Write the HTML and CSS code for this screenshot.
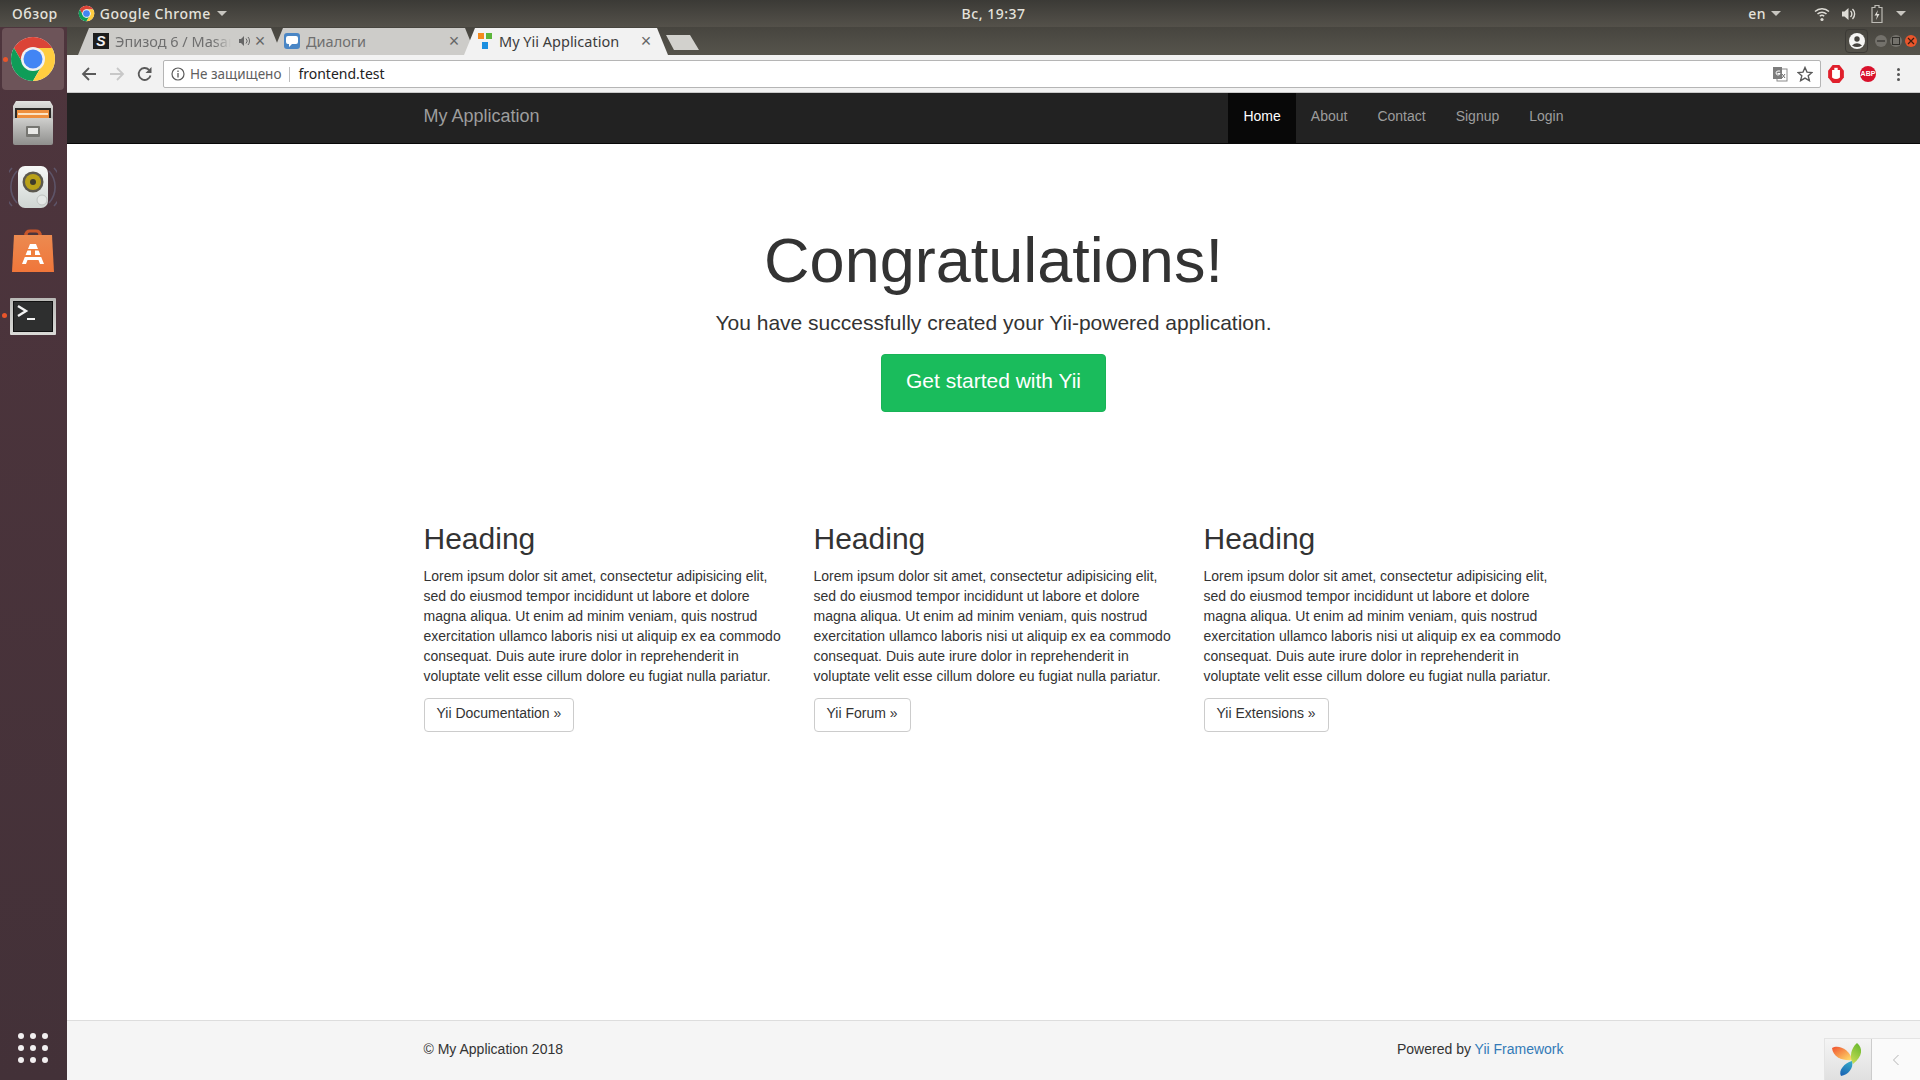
FILE: index.html
```html
<!DOCTYPE html>
<html lang="en">
<head>
<meta charset="utf-8">
<title>My Yii Application</title>
<link rel="stylesheet" href="styles.css">
</head>
<body>
<svg class="defs" width="0" height="0" aria-hidden="true">
  <defs>
    <symbol id="chrome" viewBox="0 0 48 48">
      <circle cx="24" cy="24" r="22" fill="#fff"/>
      <path fill="#db4437" d="M4.95 13A22 22 0 0 1 43.05 13H24A11 11 0 0 0 14.5 29.5Z"/>
      <path fill="#0f9d58" d="M4.95 13A22 22 0 0 0 24 46L33.5 29.5A11 11 0 0 1 14.5 29.5Z"/>
      <path fill="#ffcd40" d="M43.05 13A22 22 0 0 1 24 46L33.5 29.5A11 11 0 0 0 24 13Z"/>
      <circle cx="24" cy="24" r="12" fill="#f1f1f1"/>
      <circle cx="24" cy="24" r="9.5" fill="#4285f4"/>
    </symbol>
    <linearGradient id="cab" x1="0" y1="0" x2="0" y2="1"><stop offset="0" stop-color="#cfcfcd"/><stop offset="1" stop-color="#8f8f8d"/></linearGradient>
    <linearGradient id="cabtop" x1="0" y1="0" x2="0" y2="1"><stop offset="0" stop-color="#e2e2e0"/><stop offset="1" stop-color="#a9a9a7"/></linearGradient>
    <linearGradient id="bag" x1="0" y1="0" x2="0" y2="1"><stop offset="0" stop-color="#ec8a50"/><stop offset="1" stop-color="#f0763a"/></linearGradient>
    <linearGradient id="spk" x1="0" y1="0" x2="0" y2="1"><stop offset="0" stop-color="#f6f8f7"/><stop offset="1" stop-color="#cfd5d2"/></linearGradient>
    <linearGradient id="term" x1="0" y1="0" x2="0" y2="1"><stop offset="0" stop-color="#b9b9b6"/><stop offset="1" stop-color="#dadad7"/></linearGradient>
    <linearGradient id="ya" x1="0" y1="0" x2="1" y2="1"><stop offset="0" stop-color="#f0502e"/><stop offset="1" stop-color="#ffe36e"/></linearGradient>
    <linearGradient id="yb" x1="0.7" y1="0" x2="0.3" y2="1"><stop offset="0" stop-color="#69b82e"/><stop offset="1" stop-color="#c6dc55"/></linearGradient>
    <linearGradient id="yc" x1="0.7" y1="0" x2="0.3" y2="1"><stop offset="0" stop-color="#34a8c8"/><stop offset="1" stop-color="#1a64b4"/></linearGradient>
  </defs>
</svg>

<header class="topbar">
  <div class="top-left">
    <span class="top-item">Обзор</span>
    <span class="top-app">
      <svg class="top-chrome" width="17" height="17"><use href="#chrome"/></svg>
      <span class="top-item">Google Chrome</span>
      <span class="caret"></span>
    </span>
  </div>
  <div class="top-item top-clock">Вс, 19:37</div>
  <div class="top-right">
    <span class="top-item">en</span><span class="caret caret-en"></span>
    <svg class="ic-wifi" width="16" height="16" viewBox="0 0 16 16"><path d="M1 5.5a10 10 0 0 1 14 0M3.5 8a6.5 6.5 0 0 1 9 0M5.8 10.3a3.2 3.2 0 0 1 4.4 0" fill="none" stroke="#dedcd6" stroke-width="1.5"/><circle cx="8" cy="13.5" r="1.6" fill="#dedcd6"/></svg>
    <svg class="ic-vol" width="16" height="16" viewBox="0 0 16 16"><path d="M1 5.5h2.5L7.5 2v12L3.5 10.5H1Z" fill="#dedcd6"/><path d="M9.5 5a4 4 0 0 1 0 6M11.5 3a7 7 0 0 1 0 10" fill="none" stroke="#dedcd6" stroke-width="1.4"/></svg>
    <svg class="ic-bat" width="12" height="18" viewBox="0 0 12 18"><path d="M4 .5h4v2h3v15H1v-15h3Z" fill="none" stroke="#bdbbb5" stroke-width="1.2"/><path d="M7 5 3.500 10.500H6L5 15l3.500-6H6Z" fill="#dedcd6"/></svg>
    <span class="caret caret-end"></span>
  </div>
</header>

<div class="desktop">
  <aside class="dock">
    <div class="dock-top">
      <div class="dock-tile">
        <span class="run-dot"></span>
        <svg width="48" height="48"><use href="#chrome"/></svg>
      </div>
      <svg class="dock-cabinet" width="42" height="44" viewBox="0 0 42 44">
        <path d="M4 0h34l3 5v16H1V5Z" fill="url(#cabtop)"/>
        <rect x="3" y="7" width="36" height="14" fill="#2c2a28"/>
        <rect x="5" y="9" width="32" height="12" fill="#ee8f3e"/>
        <rect x="6" y="12" width="30" height="2" fill="#fbe3c4"/>
        <rect x="1" y="17" width="40" height="27" rx="2" fill="url(#cab)"/>
        <rect x="14" y="25" width="14" height="11" rx="1" fill="#767672"/>
        <rect x="16" y="27" width="10" height="6" fill="#e8e8e6"/>
      </svg>
      <svg class="dock-speaker" width="48" height="42" viewBox="0 0 48 42">
        <path d="M8 5a24 24 0 0 0 0 32M3 2a28 28 0 0 0 0 38M40 5a24 24 0 0 1 0 32M45 2a28 28 0 0 1 0 38" fill="none" stroke="#5d5468" stroke-width="1.6"/>
        <rect x="9" y="0" width="30" height="42" rx="7" fill="url(#spk)"/>
        <circle cx="24" cy="16" r="10.500" fill="#5c594f"/>
        <circle cx="24" cy="16" r="8" fill="#b9a118"/>
        <circle cx="24" cy="16" r="3" fill="#3f3b2c"/>
        <circle cx="33" cy="34" r="5" fill="#e4e7e5" stroke="#bfc3c0"/>
      </svg>
      <svg class="dock-bag" width="42" height="43" viewBox="0 0 42 43">
        <path d="M14 14V6q0-4 4-4h6q4 0 4 4v8" fill="none" stroke="#c8562a" stroke-width="3"/>
        <path d="M2 6h38l2 37H0Z" fill="url(#bag)"/>
        <path d="M14 6V4M28 6V4" stroke="#c8562a" stroke-width="3"/>
        <path d="M18 15h6l8 20h-4l-1.500-4h-11L14 35h-4Z" fill="#fff"/>
        <rect x="14" y="20" width="14" height="1.500" fill="#ef7f3e"/>
        <rect x="12" y="26" width="18" height="2" fill="#ef7f3e"/>
        <rect x="19" y="21" width="4" height="5" fill="#ef7f3e"/>
      </svg>
      <div class="dock-term-wrap">
        <span class="run-dot"></span>
        <svg width="46" height="37" viewBox="0 0 46 37">
          <rect width="46" height="37" rx="1" fill="url(#term)"/>
          <rect x="3" y="3" width="40" height="31" fill="#111"/>
          <rect x="4" y="4" width="38" height="29" fill="#2e2f2f"/>
          <path d="M8 8l8 5-8 5" fill="none" stroke="#f2f2f2" stroke-width="2.400"/>
          <rect x="17" y="20" width="8" height="2" fill="#f2f2f2"/>
        </svg>
      </div>
    </div>
    <div class="apps">
      <i></i><i></i><i></i><i></i><i></i><i></i><i></i><i></i><i></i>
    </div>
  </aside>

  <div class="window">
    <div class="tabstrip">
      <div class="tabs">
        <div class="tab tab-one">
          <span class="fav fav-s">S</span>
          <span class="tab-title tab-fade">Эпизод 6 / Masaru</span>
          <svg class="tab-sound" width="12" height="12" viewBox="0 0 12 12"><path d="M1 4h2l3-3v10L3 8H1Z" fill="#666"/><path d="M8 3.500a3.500 3.500 0 0 1 0 5M10 2a6 6 0 0 1 0 8" fill="none" stroke="#666"/></svg>
          <span class="tab-x">×</span>
        </div>
        <div class="tab tab-two">
          <span class="fav fav-d"><svg width="12" height="11" viewBox="0 0 12 11"><path d="M2 0h8q2 0 2 2v4q0 2-2 2H6L3 11V8H2Q0 8 0 6V2q0-2 2-2Z" fill="#fff"/></svg></span>
          <span class="tab-title">Диалоги</span>
          <span class="tab-x">×</span>
        </div>
        <div class="tab tab-active">
          <svg class="fav" width="14" height="16" viewBox="0 0 14 16"><rect width="6" height="6" fill="#f48a1c"/><rect x="8" width="6" height="6" fill="#5bb53a"/><rect x="4" y="9" width="6" height="7" fill="#1b8fe0"/></svg>
          <span class="tab-title">My Yii Application</span>
          <span class="tab-x">×</span>
        </div>
        <div class="newtab"></div>
      </div>
      <div class="win-controls">
        <span class="profile"><svg width="16" height="16" viewBox="0 0 16 16"><circle cx="8" cy="8" r="8" fill="#f5f5f3"/><circle cx="8" cy="6" r="2.700" fill="#45433e"/><path d="M3 12.500q5-4.500 10 0 -5 3-10 0Z" fill="#45433e"/></svg></span>
        <span class="wbtn"><svg width="8" height="8" viewBox="0 0 8 8"><path d="M0 4h8" stroke="#2f2e2a" stroke-width="1.200"/></svg></span>
        <span class="wbtn"><svg width="8" height="8" viewBox="0 0 8 8"><rect x=".5" y=".5" width="7" height="7" fill="none" stroke="#2f2e2a"/></svg></span>
        <span class="wbtn wbtn-close"><svg width="8" height="8" viewBox="0 0 8 8"><path d="M1 1l6 6M7 1 1 7" stroke="#3a1d10" stroke-width="1.200"/></svg></span>
      </div>
    </div>

    <div class="toolbar">
      <svg class="nav-ic" width="16" height="16" viewBox="0 0 16 16"><path d="M15 8H2M8 2 2 8l6 6" fill="none" stroke="#5a5a5a" stroke-width="1.800"/></svg>
      <svg class="nav-ic" width="16" height="16" viewBox="0 0 16 16"><path d="M1 8h13M8 2l6 6-6 6" fill="none" stroke="#c8c8c8" stroke-width="1.800"/></svg>
      <svg class="nav-ic nav-ic-last" width="16" height="16" viewBox="0 0 16 16"><path d="M13.500 9.500A6 6 0 1 1 12 3.800" fill="none" stroke="#5a5a5a" stroke-width="1.800"/><path d="M14.500 1v6h-6Z" fill="#5a5a5a"/></svg>
      <div class="omnibox">
        <svg class="info" width="14" height="14" viewBox="0 0 14 14"><circle cx="7" cy="7" r="6" fill="none" stroke="#5a5a5a" stroke-width="1.200"/><path d="M7 6v4.500M7 3.500v1.500" stroke="#5a5a5a" stroke-width="1.300"/></svg>
        <span class="insecure">Не защищено</span>
        <span class="omni-sep"></span>
        <span class="url">frontend.test</span>
        <svg class="omni-translate" width="16" height="16" viewBox="0 0 16 16"><rect x="5" y="3" width="10" height="12" fill="#fff" stroke="#8a8a8a"/><rect x="1" y="1" width="9" height="12" fill="#7d7d7d"/><path d="M8 5H6a2 2 0 1 0 2 2.500H5.500" fill="none" stroke="#fff"/><path d="M10 8l3 4M13 8l-3 4" stroke="#6d6d6d"/></svg>
        <svg class="omni-star" width="16" height="16" viewBox="0 0 16 16"><path d="M8 1.500l2 4.600 5 .4-3.800 3.300 1.200 4.900L8 12.100l-4.400 2.600 1.200-4.900L1 6.500l5-.4Z" fill="none" stroke="#5a5a5a" stroke-width="1.400"/></svg>
      </div>
      <svg class="ext ext-opera" width="18" height="18" viewBox="0 0 16 16"><path d="M5 0h6l4 5v6l-4 5H5L1 11V5Z" fill="#e0202c"/><path d="M4.500 4.500h7V11q-3.500 3-7 0Z" fill="#fff"/><path d="M6.500 2.500h3v4h-3Z" fill="#fff"/></svg>
      <span class="ext ext-abp">ABP</span>
      <span class="dots"><i></i><i></i><i></i></span>
    </div>

    <main class="page">
      <nav class="navbar">
        <div class="container nav-inner">
          <a class="brand" href="#">My Application</a>
          <ul class="nav-list">
            <li class="active"><a href="#">Home</a></li>
            <li><a href="#">About</a></li>
            <li><a href="#">Contact</a></li>
            <li><a href="#">Signup</a></li>
            <li><a href="#">Login</a></li>
          </ul>
        </div>
      </nav>

      <div class="wrap">
        <div class="container">
          <section class="jumbotron">
            <h1>Congratulations!</h1>
            <p class="lead">You have successfully created your Yii-powered application.</p>
            <p class="cta-line"><a class="btn btn-cta" href="#">Get started with Yii</a></p>
          </section>
          <section class="row">
            <article class="col">
              <h2>Heading</h2>
              <p>Lorem ipsum dolor sit amet, consectetur adipisicing elit, sed do eiusmod tempor incididunt ut labore et dolore magna aliqua. Ut enim ad minim veniam, quis nostrud exercitation ullamco laboris nisi ut aliquip ex ea commodo consequat. Duis aute irure dolor in reprehenderit in voluptate velit esse cillum dolore eu fugiat nulla pariatur.</p>
              <p><a class="btn btn-default" href="#">Yii Documentation »</a></p>
            </article>
            <article class="col">
              <h2>Heading</h2>
              <p>Lorem ipsum dolor sit amet, consectetur adipisicing elit, sed do eiusmod tempor incididunt ut labore et dolore magna aliqua. Ut enim ad minim veniam, quis nostrud exercitation ullamco laboris nisi ut aliquip ex ea commodo consequat. Duis aute irure dolor in reprehenderit in voluptate velit esse cillum dolore eu fugiat nulla pariatur.</p>
              <p><a class="btn btn-default" href="#">Yii Forum »</a></p>
            </article>
            <article class="col">
              <h2>Heading</h2>
              <p>Lorem ipsum dolor sit amet, consectetur adipisicing elit, sed do eiusmod tempor incididunt ut labore et dolore magna aliqua. Ut enim ad minim veniam, quis nostrud exercitation ullamco laboris nisi ut aliquip ex ea commodo consequat. Duis aute irure dolor in reprehenderit in voluptate velit esse cillum dolore eu fugiat nulla pariatur.</p>
              <p><a class="btn btn-default" href="#">Yii Extensions »</a></p>
            </article>
          </section>
        </div>
      </div>

      <footer class="footer">
        <div class="container foot-inner">
          <span>© My Application 2018</span>
          <span>Powered by <a href="#">Yii Framework</a></span>
        </div>
      </footer>

      <div class="debugbar">
        <span class="debug-logo">
          <svg width="36" height="34" viewBox="0 0 36 34">
            <path d="M2 5C8 1 20 6 22 17 14 18 3 15 2 5Z" fill="url(#ya)"/>
            <path d="M27 0C33 5 33 13 23 21 19 14 21 5 27 0Z" fill="url(#yb)"/>
            <path d="M22 18C24 25 18 32 11 33 8 28 14 20 22 18Z" fill="url(#yc)"/>
          </svg>
        </span>
        <span class="debug-toggle"><svg width="8" height="12" viewBox="0 0 8 12"><path d="M6.500 1 1.500 6l5 5" fill="none" stroke="#b5b5b5"/></svg></span>
      </div>
    </main>
  </div>
</div>
</body>
</html>
```

FILE: styles.css
```css
* { box-sizing: border-box; }
html, body { height: 100%; }
body {
  margin: 0;
  height: 1080px;
  overflow: hidden;
  display: flex;
  flex-direction: column;
  font-family: "Liberation Sans", Arial, sans-serif;
  font-size: 14px;
  line-height: 20px;
  color: #333;
  background: #fff;
}
.defs { position: absolute; }
a { text-decoration: none; }

/* GNOME top bar */
.topbar {
  height: 27px;
  flex: none;
  display: grid;
  grid-template-columns: 1fr auto 1fr;
  align-items: center;
  padding-left: 67px;
  background: linear-gradient(#3b3a36, #54514a);
  color: #e4e2dc;
}
.top-item {
  font-family: "Noto Sans", sans-serif;
  font-size: 14px;
  font-weight: 500;
  letter-spacing: .5px;
  line-height: 27px;
}
.top-left { display: flex; align-items: center; margin-left: -67px; padding-left: 12px; }
.top-app { display: flex; align-items: center; margin-left: 20px; }
.top-chrome { margin-right: 5px; }
.top-clock { text-align: center; }
.top-right { display: flex; align-items: center; justify-content: flex-end; padding-right: 14px; }
.caret {
  display: inline-block;
  width: 0;
  height: 0;
  margin-left: 6px;
  border-left: 5px solid transparent;
  border-right: 5px solid transparent;
  border-top: 5px solid #c8c6c0;
}
.caret-en { margin-left: 5px; }
.ic-wifi { margin-left: 33px; }
.ic-vol { margin-left: 11px; }
.ic-bat { margin-left: 14px; }
.caret-end { margin-left: 13px; }

.desktop { flex: 1; min-height: 0; display: flex; }

/* Launcher */
.dock {
  width: 67px;
  flex: none;
  display: flex;
  flex-direction: column;
  justify-content: space-between;
  align-items: center;
  background: linear-gradient(#4e353d, #433138);
  padding: 0 1px 17px 0;
}
.dock-top { display: flex; flex-direction: column; align-items: center; }
.dock-top > svg { display: block; }
.dock-tile {
  position: relative;
  width: 62px;
  height: 62px;
  margin-top: 1px;
  border-radius: 4px;
  background: #6d5459;
  display: flex;
  align-items: center;
  justify-content: center;
}
.dock-cabinet { margin-top: 11px; }
.dock-speaker { margin-top: 21px; }
.dock-bag { margin-top: 21px; }
.dock-term-wrap { position: relative; margin-top: 26px; height: 37px; }
.dock-term-wrap svg { display: block; }
.run-dot {
  position: absolute;
  width: 5px;
  height: 5px;
  border-radius: 50%;
  background: #e9552b;
}
.dock-tile .run-dot { left: 1px; top: 29px; }
.dock-term-wrap .run-dot { left: -8px; top: 15px; }
.apps {
  width: 30px;
  display: grid;
  grid-template-columns: repeat(3, 6px);
  grid-auto-rows: 6px;
  gap: 6px;
  justify-content: space-between;
}
.apps i { border-radius: 50%; background: #f2eff0; }

/* Chrome */
.window { flex: 1; min-width: 0; display: flex; flex-direction: column; }
.tabstrip {
  height: 28px;
  flex: none;
  display: flex;
  justify-content: space-between;
  background: linear-gradient(#47453f, #56544c);
}
.tabs { display: flex; padding: 1px 0 0 11px; }
.tab {
  position: relative;
  width: 204px;
  height: 27px;
  display: flex;
  align-items: center;
  padding: 0 16px 1px 15px;
  background: #cdccc9;
  clip-path: polygon(11px 0, calc(100% - 11px) 0, 100% 100%, 0 100%);
  font-family: "Noto Sans", sans-serif;
  font-size: 14.5px;
  color: #6f6f6f;
}
.tab-one { z-index: 2; }
.tab-two { z-index: 1; margin-left: -10px; padding-left: 12px; }
.tab-active { z-index: 3; margin-left: -12px; padding-left: 14px; background: #f2f2f2; color: #3c3c3c; }
.tab-active .fav { margin-right: 7px; }
.fav { flex: none; display: block; margin-right: 6px; }
.fav-s {
  width: 16px;
  height: 16px;
  background: #1d1d1d;
  color: #f2f2f2;
  font: italic bold 14px/16px "Liberation Sans", sans-serif;
  text-align: center;
}
.fav-d {
  width: 16px;
  height: 16px;
  border-radius: 3px;
  background: #4a86c5;
  display: flex;
  align-items: center;
  justify-content: center;
}
.tab-title { flex: 1; min-width: 0; white-space: nowrap; overflow: hidden; }
.tab-fade { -webkit-mask-image: linear-gradient(to right, #000 85%, transparent); mask-image: linear-gradient(to right, #000 85%, transparent); }
.tab-sound { flex: none; margin: 0 4px 0 7px; }
.tab-x { flex: none; width: 12px; text-align: center; font: 18px/18px "Liberation Sans", sans-serif; color: #666; }
.newtab {
  width: 33px;
  height: 15px;
  margin: 7px 0 0 -2px;
  background: #d2d1cd;
  clip-path: polygon(0 0, 24px 0, 33px 100%, 8px 100%);
}
.win-controls { display: flex; align-items: center; gap: 3px; padding-right: 3px; }
.profile {
  width: 23px;
  height: 24px;
  margin-right: 4px;
  border: 1px solid #3c3a36;
  border-radius: 4px;
  display: flex;
  align-items: center;
  justify-content: center;
}
.wbtn {
  width: 12px;
  height: 12px;
  border-radius: 50%;
  background: #73716b;
  display: flex;
  align-items: center;
  justify-content: center;
}
.wbtn-close { background: #e9552b; }

.toolbar {
  height: 38px;
  flex: none;
  display: flex;
  align-items: center;
  padding: 1px 19px 0 14px;
  background: #f2f2f2;
  border-bottom: 1px solid #c9c9c9;
}
.nav-ic { flex: none; margin-right: 12px; }
.nav-ic-last { margin-right: 10px; }
.omnibox {
  flex: 1;
  height: 28px;
  display: flex;
  align-items: center;
  padding: 0 7px 0 7px;
  background: #fff;
  border: 1px solid #b5b5b5;
  border-radius: 2px;
  font-family: "Noto Sans", sans-serif;
  font-size: 13.5px;
}
.info { flex: none; margin-right: 5px; }
.insecure { color: #5f5f5f; }
.omni-sep { width: 1px; height: 15px; margin: 0 8px; background: #bdbdbd; }
.url { flex: 1; color: #222; font-size: 14px; }
.omni-translate { flex: none; margin-right: 9px; }
.omni-star { flex: none; }
.ext { flex: none; }
.ext-opera { margin-left: 6px; }
.ext-abp {
  width: 16px;
  height: 16px;
  margin-left: 15px;
  border-radius: 50%;
  background: #d9112c;
  color: #fff;
  font: bold 7px/16px "Liberation Sans", sans-serif;
  text-align: center;
}
.dots { flex: none; margin-left: 21px; margin-right: 1px; display: flex; flex-direction: column; gap: 2px; }
.dots i { width: 3px; height: 3px; border-radius: 50%; background: #555; }

/* Page */
.page { position: relative; flex: 1; min-height: 0; display: flex; flex-direction: column; }
.container { width: 1170px; margin: 0 auto; padding: 0 15px; }
.navbar { height: 51px; flex: none; background: #222; border-bottom: 1px solid #080808; }
.nav-inner { display: flex; justify-content: space-between; height: 50px; }
.brand { font-size: 18px; line-height: 20px; padding: 13px 0 17px; color: #9d9d9d; }
.nav-list { display: flex; list-style: none; margin: 0 -15px 0 0; padding: 0; }
.nav-list a { display: block; padding: 13px 15px 17px; color: #9d9d9d; }
.nav-list .active a { background: #080808; color: #fff; }

.wrap { flex: 1; padding-top: 14px; }
.jumbotron { padding: 48px 0; text-align: center; margin-bottom: 30px; }
h1 { margin: 20px 0 13px; font-size: 63px; font-weight: 500; line-height: 69px; }
.lead { margin: 0 0 16px; font-size: 21px; line-height: 30px; }
.cta-line { margin: 0 0 12px; }
.btn { display: inline-block; border: 1px solid transparent; border-radius: 4px; }
.btn-cta {
  padding: 12px 24px 16px;
  font-size: 21px;
  line-height: 28px;
  background: #1abc5c;
  border-color: #19b357;
  color: #fff;
}
.btn-default { padding: 4px 12px 8px; background: #fff; border-color: #ccc; color: #333; }
.row { display: grid; grid-template-columns: repeat(3, 1fr); margin: 0 -15px; }
.col { padding: 0 15px; }
.col p { margin: 0 0 12px; }
h2 { margin: 20px 0 11px; font-size: 30px; font-weight: 500; line-height: 33px; }

.footer { height: 60px; flex: none; padding-top: 18px; background: #f5f5f5; border-top: 1px solid #ddd; }
.foot-inner { display: flex; justify-content: space-between; }
.foot-inner a { color: #337ab7; }

.debugbar {
  position: absolute;
  right: 0;
  bottom: 0;
  width: 96px;
  height: 42px;
  display: flex;
  border: 1px solid #e4e4e4;
  border-bottom: 0;
  border-right: 0;
}
.debug-logo {
  width: 47px;
  display: flex;
  align-items: center;
  justify-content: center;
  background: linear-gradient(#f4f4f4, #e0e0e0);
  border-right: 1px solid #ccc;
}
.debug-toggle { flex: 1; display: flex; align-items: center; justify-content: center; background: #fafafa; }
```
